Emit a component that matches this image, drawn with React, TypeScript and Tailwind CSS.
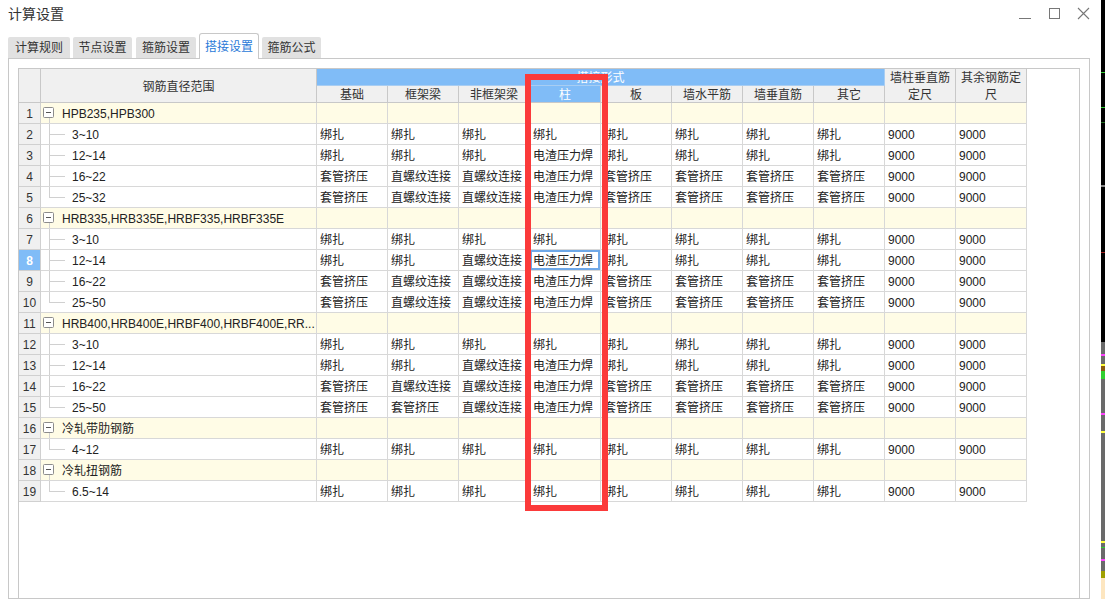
const B = "绑扎";
const D = "电渣压力焊";
const Z = "直螺纹连接";
const T = "套管挤压";

type Row = { no: number; label: string; group?: boolean; cells?: string[]; last?: boolean };

const rows: Row[] = [
  { no: 1, label: "HPB235,HPB300", group: true },
  { no: 2, label: "3~10", cells: [B, B, B, B, B, B, B, B, "9000", "9000"] },
  { no: 3, label: "12~14", cells: [B, B, B, D, B, B, B, B, "9000", "9000"] },
  { no: 4, label: "16~22", cells: [T, Z, Z, D, T, T, T, T, "9000", "9000"] },
  { no: 5, label: "25~32", cells: [T, Z, Z, D, T, T, T, T, "9000", "9000"], last: true },
  { no: 6, label: "HRB335,HRB335E,HRBF335,HRBF335E", group: true },
  { no: 7, label: "3~10", cells: [B, B, B, B, B, B, B, B, "9000", "9000"] },
  { no: 8, label: "12~14", cells: [B, B, Z, D, B, B, B, B, "9000", "9000"] },
  { no: 9, label: "16~22", cells: [T, Z, Z, D, T, T, T, T, "9000", "9000"] },
  { no: 10, label: "25~50", cells: [T, Z, Z, D, T, T, T, T, "9000", "9000"], last: true },
  { no: 11, label: "HRB400,HRB400E,HRBF400,HRBF400E,RR...", group: true },
  { no: 12, label: "3~10", cells: [B, B, B, B, B, B, B, B, "9000", "9000"] },
  { no: 13, label: "12~14", cells: [B, B, Z, D, B, B, B, B, "9000", "9000"] },
  { no: 14, label: "16~22", cells: [T, Z, Z, D, T, T, T, T, "9000", "9000"] },
  { no: 15, label: "25~50", cells: [T, T, Z, D, T, T, T, T, "9000", "9000"], last: true },
  { no: 16, label: "冷轧带肋钢筋", group: true },
  { no: 17, label: "4~12", cells: [B, B, B, B, B, B, B, B, "9000", "9000"], last: true },
  { no: 18, label: "冷轧扭钢筋", group: true },
  { no: 19, label: "6.5~14", cells: [B, B, B, B, B, B, B, B, "9000", "9000"], last: true },
];

const subHeads = ["基础", "框架梁", "非框架梁", "柱", "板", "墙水平筋", "墙垂直筋", "其它"];

function TreeCell({ row }: { row: Row }) {
  if (row.group) {
    return (
      <div className="flex items-center h-full bg-[#fffce6] border-r border-b border-[#d8d8d8] overflow-hidden whitespace-nowrap">
        <svg width="14" height="20" className="shrink-0">
          <rect x="2.5" y="4.5" width="10" height="10" rx="1" fill="#fff" stroke="#8c8c8c" />
          <line x1="5" y1="9.5" x2="10" y2="9.5" stroke="#555" />
          <line x1="8.5" y1="15" x2="8.5" y2="20" stroke="#d0d0d0" />
        </svg>
        <span className="ml-[7px] pt-[2px]">{row.label}</span>
      </div>
    );
  }
  return (
    <div className="flex items-center h-full border-r border-b border-[#d8d8d8] bg-white whitespace-nowrap">
      <svg width="26" height="20" className="shrink-0">
        <line x1="8.5" y1="0" x2="8.5" y2={row.last ? 10 : 20} stroke="#d0d0d0" />
        <line x1="8" y1="10.5" x2="24" y2="10.5" stroke="#d0d0d0" />
      </svg>
      <span className="ml-[5px] pt-[2px]">{row.label}</span>
    </div>
  );
}

export default function App() {
  return (
    <div className="relative flex w-[1105px] h-[599px] overflow-hidden bg-white font-['Liberation_Sans','Noto_Sans_CJK_SC',sans-serif] text-[12px] text-[#222]">
      <div className="w-[1101px] h-full flex flex-col">
        {/* title bar */}
        <div className="h-[33px] flex items-start justify-between">
          <div className="pl-[8px] pt-[4px] text-[14px] text-[#333]">计算设置</div>
          <div className="flex items-center gap-[17px] pt-[7px] pr-[11px]">
            <svg width="12" height="12"><line x1="0" y1="10.5" x2="12" y2="10.5" stroke="#777" /></svg>
            <svg width="12" height="12"><rect x="1.5" y="0.5" width="10" height="10" fill="none" stroke="#777" /></svg>
            <svg width="13" height="13"><path d="M1 1 L12 12 M12 1 L1 12" stroke="#777" strokeWidth="1.1" /></svg>
          </div>
        </div>

        {/* tabs */}
        <div className="flex items-end h-[25px]">
          <div className="ml-[8px] w-[62px] h-[21px] flex items-center justify-center bg-[#e1e1e1] rounded-t-[2px] text-[#333]">计算规则</div>
          <div className="ml-[3px] w-[59px] h-[21px] flex items-center justify-center bg-[#e1e1e1] rounded-t-[2px] text-[#333]">节点设置</div>
          <div className="ml-[4px] w-[60px] h-[21px] flex items-center justify-center bg-[#e1e1e1] rounded-t-[2px] text-[#333]">箍筋设置</div>
          <div className="ml-[3px] w-[60px] h-[26px] -mb-px z-10 flex items-center justify-center bg-white border border-b-0 border-[#c8c8c8] rounded-t-[3px] text-[#2a7ad8]">搭接设置</div>
          <div className="ml-[3px] w-[59px] h-[21px] flex items-center justify-center bg-[#e1e1e1] rounded-t-[2px] text-[#333]">箍筋公式</div>
        </div>

        {/* panel */}
        <div className="ml-[8px] w-[1082px] flex-1 border border-[#c8c8c8] p-[9px] pb-0">
          <div className="w-[1062px] h-full border border-[#c8c8c8] border-b-0">
            {/* header */}
            <div className="grid grid-cols-[22px_276px_repeat(10,71px)] grid-rows-[17px_17px] text-[#333]">
              <div className="row-span-2 bg-[#f0f0f0] border-r border-b border-[#c8c8c8]" />
              <div className="row-span-2 bg-[#f0f0f0] border-r border-b border-[#c8c8c8] flex items-center justify-center pt-[2px]">钢筋直径范围</div>
              <div className="col-span-8 bg-[#80bcf7] border-r border-b border-[#a8cdf2] flex items-center justify-center text-white pt-[2px]">搭接形式</div>
              <div className="row-start-1 col-start-11 row-span-2 bg-[#f0f0f0] border-r border-b border-[#c8c8c8] flex items-center justify-center text-center leading-[17px] px-[2px] pt-[2px]">墙柱垂直筋定尺</div>
              <div className="row-start-1 col-start-12 row-span-2 bg-[#f0f0f0] border-r border-b border-[#c8c8c8] flex items-center justify-center text-center leading-[17px] px-[2px] pt-[2px]">其余钢筋定尺</div>
              {subHeads.map((h, i) => (
                <div
                  key={h}
                  className={
                    i === 3
                      ? "bg-[#80bcf7] text-white border-r border-b border-[#c8c8c8] flex items-center justify-center pt-[2px]"
                      : "bg-[#f0f0f0] border-r border-b border-[#c8c8c8] flex items-center justify-center pt-[2px]"
                  }
                >
                  {h}
                </div>
              ))}
            </div>

            {/* body */}
            <div className="grid grid-cols-[22px_276px_repeat(10,71px)] auto-rows-[21px]">
              {rows.map((row) => (
                <div key={row.no} className="contents">
                  <div
                    className={
                      row.no === 8
                        ? "flex items-center justify-center pt-[2px] bg-[#80bcf7] text-white font-bold border-r border-b border-[#d0d0d0]"
                        : "flex items-center justify-center pt-[2px] bg-[#f0f0f0] text-[#333] border-r border-b border-[#d0d0d0]"
                    }
                  >
                    {row.no}
                  </div>
                  <TreeCell row={row} />
                  {Array.from({ length: 10 }).map((_, i) => {
                    const text = row.cells ? row.cells[i] : "";
                    const selected = row.no === 8 && i === 3;
                    return (
                      <div
                        key={i}
                        className={
                          (row.group ? "bg-[#fffce6] " : "bg-white ") +
                          (selected ? "relative ring-2 ring-inset ring-[#6ea8e8] " : "") +
                          "flex items-center pl-[3px] pt-[2px] border-r border-b border-[#d8d8d8] whitespace-nowrap overflow-hidden"
                        }
                      >
                        {text}
                        {selected && <span className="absolute right-[-2px] bottom-[-2px] w-[4px] h-[4px] bg-[#6ea8e8]" />}
                      </div>
                    );
                  })}
                </div>
              ))}
            </div>
          </div>
        </div>
      </div>

      {/* right edge strip */}
      <div className="w-[4px] h-full flex flex-col">
        <div className="h-[72px] bg-black" />
        <div className="h-[1px] bg-[#2ecc2e]" />
        <div className="h-[34px] bg-black" />
        <div className="h-[1px] bg-[#2ecc2e]" />
        <div className="h-[14px] bg-black" />
        <div className="h-[1px] bg-[#1f6b1f]" />
        <div className="h-[62px] bg-black" />
        <div className="h-[2px] bg-[#888]" />
        <div className="h-[65px] bg-black" />
        <div className="h-[1px] bg-[#a02020]" />
        <div className="h-[89px] bg-black" />
        <div className="h-[12px] bg-[#6a6a6a]" />
        <div className="h-[2px] bg-[#ff40ff]" />
        <div className="h-[8px] bg-[#6a6a6a]" />
        <div className="h-[2px] bg-[#ffff40]" />
        <div className="h-[5px] bg-[#8a5a10]" />
        <div className="h-[8px] bg-[#30d030]" />
        <div className="h-[34px] bg-[#6a6a6a]" />
        <div className="h-[2px] bg-[#ff40ff]" />
        <div className="h-[16px] bg-[#6a6a6a]" />
        <div className="h-[2px] bg-[#ffff40]" />
        <div className="h-[108px] bg-[#6a6a6a]" />
        <div className="h-[2px] bg-[#ffff40]" />
        <div className="h-[4px] bg-[#6a6a6a]" />
        <div className="h-[1px] bg-[#30d030]" />
        <div className="h-[11px] bg-[#6a6a6a]" />
        <div className="h-[2px] bg-[#ff40ff]" />
        <div className="h-[10px] bg-[#6a6a6a]" />
        <div className="h-[7px] bg-[#a0a000]" />
        <div className="flex-1 bg-[#fde6c0]" />
      </div>

      {/* red highlight box */}
      <div className="absolute left-[525px] top-[74px] w-[83px] h-[437px] border-[6px] border-[#fb3a3a]" />
    </div>
  );
}
